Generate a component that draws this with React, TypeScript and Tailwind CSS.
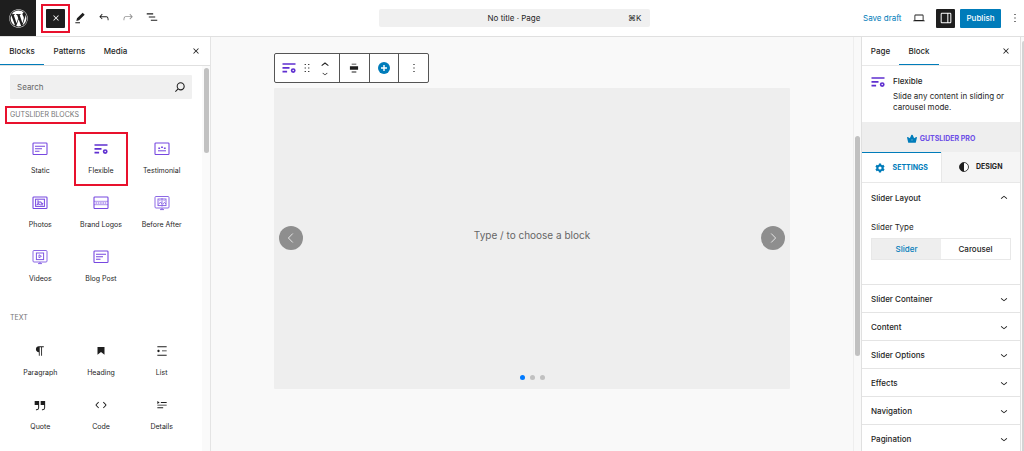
import type { ReactNode } from "react";
import { FaWordpress } from "react-icons/fa";

const paths = {
  close:
    "M12 13.06l3.712 3.713 1.061-1.06L13.061 12l3.712-3.712-1.06-1.06L12 10.938 8.288 7.227l-1.061 1.06L10.939 12l-3.712 3.712 1.06 1.061L12 13.061z",
  pencil: "m19 7-3-3-8.5 8.5-1 4 4-1L19 7Zm-7 11.5H5V20h7v-1.5Z",
  undo: "M18.3 11.7c-.6-.6-1.4-.9-2.3-.9H6.7l2.9-3.3-1.1-1-4.5 5L8.5 16l1-1-2.7-2.7H16c.5 0 .9.2 1.3.5 1 1 1 3.4 1 4.5v.3h1.5v-.2c0-1.5 0-4.3-1.5-5.7z",
  redo: "M15.6 6.5l-1.1 1 2.9 3.3H8c-.9 0-1.7.3-2.3.9-1.4 1.5-1.4 4.2-1.4 5.6v.2h1.5v-.3c0-1.1 0-3.5 1-4.5.3-.3.7-.5 1.3-.5h9.2L14.5 15l1.1 1.1 4.6-4.6-4.6-5z",
  listView: "M3 5.5h11V7.5H3V5.5Zm3.5 5.5h11v2h-11v-2ZM21 16.5H10v2h11v-2Z",
  more: "M13 19h-2v-2h2v2zm0-6h-2v-2h2v2zm0-6h-2V5h2v2z",
  drag: "M8 7h2V5H8v2zm0 6h2v-2H8v2zm0 6h2v-2H8v2zm6-14v2h2V5h-2zm0 8h2v-2h-2v2zm0 6h2v-2h-2v2z",
  search:
    "M13 5c-3.3 0-6 2.7-6 6 0 1.4.5 2.7 1.3 3.7l-3.8 3.8 1.1 1.1 3.8-3.8c1 .8 2.3 1.3 3.7 1.3 3.3 0 6-2.7 6-6S16.3 5 13 5zm0 10.5c-2.5 0-4.5-2-4.5-4.5s2-4.5 4.5-4.5 4.5 2 4.5 4.5-2 4.5-4.5 4.5z",
  laptop:
    "M20.5 16h-.7V8c0-1.1-.9-2-2-2H6.2c-1.1 0-2 .9-2 2v8h-.7c-.8 0-1.5.7-1.5 1.5h20c0-.8-.7-1.5-1.5-1.5zM5.7 8c0-.3.2-.5.5-.5h11.6c.3 0 .5.2.5.5v7.6H5.7V8z",
  drawer:
    "M18 4H6c-1.1 0-2 .9-2 2v12c0 1.1.9 2 2 2h12c1.1 0 2-.9 2-2V6c0-1.1-.9-2-2-2zm-4 14.5H6c-.3 0-.5-.2-.5-.5V6c0-.3.2-.5.5-.5h8v13zm4.5-.5c0 .3-.2.5-.5.5h-2.5v-13H18c.3 0 .5.2.5.5v12z",
  chevronDown: "M17.5 11.6L12 16l-5.5-4.4.9-1.2L12 14l4.5-3.6 1 1.2z",
  chevronUp: "M6.5 12.4L12 8l5.5 4.4-.9 1.2L12 10l-4.5 3.6-1-1.2z",
  align: "M5 9h14v6H5V9Zm3-4.5h8V6H8V4.5ZM8 18h8v1.5H8V18Z",
  paragraph:
    "m9.996 14v-.225l.004 0v6.225h1.5v-14.5h2.5v14.5h1.5v-14.5h3v-1.5h-8.504c-2.761 0-5 2.239-5 5 0 2.761 2.239 5 5 5z",
  heading: "M6 5V18.591L12 13.847L18 18.591V5H6Z",
  list: "M4 4v1.5h16V4H4zm8 8.5h8V11h-8v1.5zM4 20h16v-1.5H4V20zm4-8c0-1.1-.9-2-2-2s-2 .9-2 2 .9 2 2 2 2-.9 2-2z",
  quote:
    "M13 6v6h5.2v4c0 .8-.2 1.4-.5 1.7-.6.6-1.6.6-2.5.5h-.3v1.5h.5c1 0 2.3-.1 3.3-1 .6-.6 1-1.6 1-2.8V6H13zm-9 6h5.2v4c0 .8-.2 1.4-.5 1.7-.6.6-1.6.6-2.5.5h-.3v1.5h.5c1 0 2.3-.1 3.3-1 .6-.6 1-1.6 1-2.8V6H4v6z",
  code: "M20.8 10.7l-4.3-4.3-1.1 1.1 4.3 4.3c.1.1.1.3 0 .4l-4.3 4.3 1.1 1.1 4.3-4.3c.7-.8.7-1.9 0-2.6zM4.2 11.8l4.3-4.3-1-1-4.3 4.3c-.7.7-.7 1.8 0 2.5l4.3 4.3 1.1-1.1-4.3-4.3c-.2-.1-.2-.3-.1-.4z",
  details:
    "M4 16h10v1.5H4V16Zm0-4.5h16V13H4v-1.5ZM10 7h10v1.5H10V7ZM4 5.25l4 2.5-4 2.5v-5Z",
};

function Icon({
  name,
  className = "size-3.5",
}: { name: keyof typeof paths; className?: string }) {
  return (
    <svg viewBox="0 0 24 24" fill="currentColor" className={className}>
      <path d={paths[name]} />
    </svg>
  );
}

function FlexibleIcon() {
  return (
    <svg viewBox="0 0 14 12" className="h-3 w-3.5 text-[#5f2fd0]">
      <path
        d="M.5 2h13M.5 5.9h7M.5 9.7h4.6"
        stroke="currentColor"
        strokeWidth="1.7"
      />
      <circle
        cx="11.2"
        cy="8.6"
        r="1.6"
        fill="none"
        stroke="currentColor"
        strokeWidth="1.7"
      />
    </svg>
  );
}

// Rounded card outline shared by the slider block icons
function CardIcon({ children }: { children: ReactNode }) {
  return (
    <svg
      viewBox="0 0 16 14"
      fill="none"
      stroke="#7748e0"
      className="h-3.5 w-4"
    >
      <rect x="1" y="1" width="14" height="11.5" rx=".8" strokeWidth="1.1" />
      {children}
    </svg>
  );
}

function ScreenIcon({ children }: { children: ReactNode }) {
  return (
    <svg
      viewBox="0 0 16 16"
      fill="none"
      stroke="#8058e2"
      className="size-4"
    >
      <rect x="1" y="1.5" width="14" height="11.5" rx="1" strokeWidth=".9" />
      <path d="M6 14.6h4M8 13v1.5" strokeWidth=".9" />
      {children}
    </svg>
  );
}

const textLines = <path d="M3 4.2h10M3 6.7h7M3 9.2h4.5" strokeWidth="1.1" />;

const sliderBlocks = [
  { label: "Static", icon: <CardIcon>{textLines}</CardIcon> },
  { label: "Flexible", icon: <FlexibleIcon />, marked: true },
  {
    label: "Testimonial",
    icon: (
      <CardIcon>
        <path d="M4 8.8h8" strokeWidth="1" />
        <path d="M4.3 6.2h1.8M7.1 5.2h1.8M9.9 6.2h1.8" strokeWidth="1.4" />
      </CardIcon>
    ),
  },
  {
    label: "Photos",
    icon: (
      <CardIcon>
        <rect x="3.6" y="3.2" width="8.8" height="7.2" strokeWidth="1" />
        <path d="M6 4.2v5M6 6h3.2v1.4h2M4.5 8.8l2-1 2 1h2.5" />
      </CardIcon>
    ),
  },
  {
    label: "Brand Logos",
    icon: (
      <CardIcon>
        <path d="M1 5.3h14M1 8.7h14" strokeWidth=".6" />
        <path d="M2.5 7h11" strokeWidth="1.6" strokeDasharray="1.6 .7" opacity=".6" />
      </CardIcon>
    ),
  },
  {
    label: "Before After",
    icon: (
      <ScreenIcon>
        <rect x="4" y="4" width="8" height="6.6" strokeWidth=".9" />
        <path d="M8 3v8.6M4.5 9.4l2-2.4 1.5 2M9 9.4l1.4-2L12 9M5.4 5.6h1M9.6 5.6h1" strokeWidth=".8" />
      </ScreenIcon>
    ),
  },
  {
    label: "Videos",
    icon: (
      <ScreenIcon>
        <rect x="4.4" y="4" width="7.2" height="6.6" strokeWidth="1" />
        <path d="M7 5.8v3l2.4-1.5z" strokeWidth=".9" />
      </ScreenIcon>
    ),
  },
  { label: "Blog Post", icon: <CardIcon>{textLines}</CardIcon> },
];

const textBlocks = [
  { label: "Paragraph", icon: <Icon name="paragraph" /> },
  { label: "Heading", icon: <Icon name="heading" /> },
  { label: "List", icon: <Icon name="list" /> },
  { label: "Quote", icon: <Icon name="quote" className="size-4" /> },
  { label: "Code", icon: <Icon name="code" /> },
  { label: "Details", icon: <Icon name="details" /> },
];

const panels = [
  "Slider Container",
  "Content",
  "Slider Options",
  "Effects",
  "Navigation",
  "Pagination",
];

interface Block {
  label: string;
  icon: ReactNode;
  marked?: boolean;
}

function BlockGrid({ blocks }: { blocks: Block[] }) {
  return (
    <div className="grid grid-cols-3">
      {blocks.map((b) => (
        <button
          key={b.label}
          type="button"
          className={`mx-[3px] flex h-[54px] flex-col items-center justify-center gap-2 whitespace-nowrap text-[7px] leading-3 ${
            b.marked ? "border-2 border-[#e8112d]" : ""
          }`}
        >
          <span className="flex h-4 items-center">{b.icon}</span>
          {b.label}
        </button>
      ))}
    </div>
  );
}

function Header() {
  return (
    <header className="flex h-[37px] shrink-0 items-center border-b border-[#e0e0e0] bg-white">
      <a
        href="#dashboard"
        aria-label="View pages"
        className="flex size-9 items-center justify-center bg-[#1e1e1e] text-white"
      >
        <FaWordpress size={19} />
      </a>
      <div className="ml-[5px] border-2 border-[#e8112d] p-[3px]">
        <button
          type="button"
          aria-label="Close block inserter"
          className="flex size-[19px] items-center justify-center rounded-[1px] bg-[#1e1e1e] text-white"
        >
          <Icon name="close" />
        </button>
      </div>
      <div className="flex gap-1">
        <button type="button" aria-label="Tools" className="flex w-5 justify-center">
          <Icon name="pencil" className="size-4" />
        </button>
        <button type="button" aria-label="Undo" className="flex w-5 justify-center">
          <Icon name="undo" />
        </button>
        <button
          type="button"
          aria-label="Redo"
          className="flex w-5 justify-center text-[#949494]"
        >
          <Icon name="redo" />
        </button>
        <button type="button" aria-label="Document overview" className="flex w-5 justify-center">
          <Icon name="listView" />
        </button>
      </div>
      <div className="flex flex-1 justify-center pl-[3px]">
        <button
          type="button"
          className="grid h-[18px] w-full max-w-[271px] grid-cols-[1fr_auto_1fr] items-center rounded-[2px] bg-[#f0f0f0] px-2"
        >
          <span className="col-start-2">No title · Page</span>
          <span className="text-right">⌘K</span>
        </button>
      </div>
      <div className="flex items-center pr-0.5">
        <button type="button" className="w-[39px] whitespace-nowrap text-left text-[#007cba]">
          Save draft
        </button>
        <button type="button" aria-label="View" className="flex w-[34px] justify-center">
          <Icon name="laptop" />
        </button>
        <button
          type="button"
          aria-label="Settings"
          className="flex size-[19px] items-center justify-center rounded-[1px] bg-[#1e1e1e] text-white"
        >
          <Icon name="drawer" className="size-4" />
        </button>
        <button
          type="button"
          className="ml-[5px] h-[19px] w-[41px] rounded-[1px] bg-[#007cba] font-medium text-white"
        >
          Publish
        </button>
        <button type="button" aria-label="Options" className="ml-[7px] flex w-3.5 justify-center">
          <Icon name="more" className="size-4" />
        </button>
      </div>
    </header>
  );
}

function Inserter() {
  return (
    <aside className="flex w-[211px] shrink-0 flex-col border-r border-[#e4e4e4] bg-white">
      <div className="flex h-[29px] shrink-0 items-stretch border-b border-[#e0e0e0] font-medium">
        <button type="button" className="w-11 border-b border-[#007cba]">
          Blocks
        </button>
        <button type="button" className="w-[51px]">
          Patterns
        </button>
        <button type="button" className="w-[41px]">
          Media
        </button>
        <button type="button" aria-label="Close" className="ml-auto mr-[7px]">
          <Icon name="close" />
        </button>
      </div>
      <div className="flex min-h-0 flex-1">
        <div className="min-w-0 flex-1 overflow-hidden pb-2">
          <div className="mx-2.5 mt-[9px] flex h-6 items-center rounded-[1px] bg-[#f0f0f0] pl-[7px] pr-1">
            <input
              type="text"
              aria-label="Search"
              placeholder="Search"
              className="min-w-0 flex-1 bg-transparent outline-none placeholder:text-[#666]"
            />
            <Icon name="search" className="size-4" />
          </div>
          <h2 className="ml-[5px] mt-[7px] flex h-[18px] w-[81px] items-center whitespace-nowrap border-2 border-[#e8112d] pl-[3px] text-[7px] text-[#757575]">
            GUTSLIDER BLOCKS
          </h2>
          <div className="px-2.5 pt-2">
            <BlockGrid blocks={sliderBlocks} />
          </div>
          <h2 className="ml-2.5 mt-4 text-[7px] leading-4 text-[#757575]">
            TEXT
          </h2>
          <div className="px-2.5 pt-2">
            <BlockGrid blocks={textBlocks} />
          </div>
        </div>
        <div className="w-2 bg-[#fafafa] pl-0.5 pr-px pt-0.5">
          <div className="h-[85px] rounded-full bg-[#c1c1c1]" />
        </div>
      </div>
    </aside>
  );
}

function BlockToolbar() {
  return (
    <div className="flex h-[30px] w-[155px] divide-x divide-[#555] rounded-[2px] border border-[#555] bg-white">
      <div className="flex w-[65px] items-center justify-between pl-[7px] pr-1.5">
        <button type="button" aria-label="Flexible">
          <FlexibleIcon />
        </button>
        <button type="button" aria-label="Drag">
          <Icon name="drag" />
        </button>
        <div className="flex flex-col">
          <button type="button" aria-label="Move up" className="h-[11px] overflow-hidden">
            <Icon name="chevronUp" className="size-4" />
          </button>
          <button
            type="button"
            aria-label="Move down"
            className="flex h-[11px] flex-col justify-end overflow-hidden"
          >
            <Icon name="chevronDown" className="size-4" />
          </button>
        </div>
      </div>
      <button type="button" aria-label="Align" className="flex flex-1 items-center justify-center">
        <Icon name="align" />
      </button>
      <button type="button" aria-label="Add slide" className="flex flex-1 items-center justify-center">
        <svg viewBox="0 0 12 12" className="size-3">
          <circle cx="6" cy="6" r="6" fill="#007cba" />
          <path d="M6 3v6M3 6h6" stroke="#fff" strokeWidth="1.4" />
        </svg>
      </button>
      <button type="button" aria-label="Options" className="flex flex-1 items-center justify-center">
        <Icon name="more" />
      </button>
    </div>
  );
}

function SlideArrow({ d, label }: { d: string; label: string }) {
  return (
    <button
      type="button"
      aria-label={label}
      className="flex size-6 items-center justify-center rounded-full bg-[#8e8e8e]"
    >
      <svg viewBox="0 0 12 12" fill="none" stroke="#e6e6e6" className="size-3">
        <path d={d} strokeWidth="1" />
      </svg>
    </button>
  );
}

function Canvas() {
  return (
    <main className="flex min-w-0 flex-1 bg-[#f9f9f9]">
      <div className="min-w-0 flex-1 px-[63px] pt-4">
        <BlockToolbar />
        <section className="mt-[5px] flex h-[301px] flex-col rounded-[1px] bg-[#eee] pb-[9px]">
          <div className="flex flex-1 items-center justify-between px-[5px] pt-3">
            <SlideArrow d="M7.8 1.5 3.4 6l4.4 4.5" label="Previous slide" />
            <p className="pb-1.5 text-[10px] text-[#666]">
              Type / to choose a block
            </p>
            <SlideArrow d="M4.2 1.5 8.6 6l-4.4 4.5" label="Next slide" />
          </div>
          <div className="flex justify-center gap-[5px]">
            <span className="size-[5px] rounded-full bg-[#007aff]" />
            <span className="size-[5px] rounded-full bg-[#c0c0c0]" />
            <span className="size-[5px] rounded-full bg-[#c0c0c0]" />
          </div>
        </section>
      </div>
      <div className="w-2 border-l border-[#eee] px-px pt-[99px]">
        <div className="h-[220px] w-[5px] rounded-full bg-[#c1c1c1]" />
      </div>
    </main>
  );
}

function Sidebar() {
  return (
    <aside className="w-40 shrink-0 overflow-hidden border-x border-[#e0e0e0] bg-white">
      <div className="flex h-[29px] items-stretch border-b border-[#e8e8e8] font-medium">
        <button type="button" className="w-[37px]">
          Page
        </button>
        <button type="button" className="w-10 border-b border-[#007cba]">
          Block
        </button>
        <button type="button" aria-label="Close settings" className="ml-auto mr-[7px]">
          <Icon name="close" />
        </button>
      </div>
      <div className="flex gap-2 px-[9px] pb-[9px] pt-2.5">
        <FlexibleIcon />
        <div className="leading-[11px]">
          <h2 className="font-medium">Flexible</h2>
          <p className="mt-1 whitespace-nowrap">
            Slide any content in sliding or
            <br />
            carousel mode.
          </p>
        </div>
      </div>
      <a
        href="#pro"
        className="flex h-[30px] items-center justify-center gap-[3px] bg-[#eee] pt-1 text-[7px] font-bold text-[#6c4ee6]"
      >
        <svg viewBox="0 0 12 10" fill="#007cba" className="size-2.5">
          <path
            fillRule="evenodd"
            d="M1 2.6 3.4 4 4.8 1.2a1.2 1.2 0 1 1 2.4 0L8.6 4 11 2.6a.7.7 0 0 1 .9.8L10.5 9.6H1.5L.1 3.4A.7.7 0 0 1 1 2.6ZM6 5.2 5.2 6.6h1.6L6 5.2Z"
          />
        </svg>
        GUTSLIDER PRO
      </a>
      <div className="flex h-[31px] border-b border-[#e8e8e8] text-[7px] font-bold">
        <button
          type="button"
          className="flex flex-1 items-center justify-center gap-2 border-t border-[#007cba] text-[#007cba]"
        >
          <svg viewBox="0 0 24 24" fill="currentColor" className="size-2.5">
            <path
              fillRule="evenodd"
              d="M9.5 1h5l.6 3 2.2 1.3 2.9-1 2.8 4.6-2.3 2v2.2l2.3 2-2.8 4.6-2.9-1-2.2 1.3-.6 3h-5l-.6-3-2.2-1.3-2.9 1L1 15.1l2.3-2v-2.2L1 8.9l2.8-4.6 2.9 1L8.9 4l.6-3ZM12 8.2a3.8 3.8 0 1 0 0 7.6 3.8 3.8 0 0 0 0-7.6Z"
            />
          </svg>
          SETTINGS
        </button>
        <button
          type="button"
          className="flex flex-1 items-center justify-center gap-[7px] border-l border-[#e8e8e8] bg-[#f5f5f5]"
        >
          <svg viewBox="0 0 12 12" className="size-2.5">
            <circle cx="6" cy="6" r="5.4" fill="#fff" stroke="#1e1e1e" />
            <path d="M6 .6a5.4 5.4 0 0 0 0 10.8Z" fill="#1e1e1e" />
          </svg>
          DESIGN
        </button>
      </div>
      <div className="h-[101px] px-[9px]">
        <button
          type="button"
          className="flex h-[29px] w-full items-center justify-between font-medium"
        >
          Slider Layout
          <Icon name="chevronUp" />
        </button>
        <div className="mt-2 leading-[14px]">Slider Type</div>
        <div className="mt-1 flex h-[22px] border border-[#e8e8e8]">
          <button type="button" className="flex-1 bg-[#eee] font-medium text-[#007cba]">
            Slider
          </button>
          <button type="button" className="flex-1 font-medium">
            Carousel
          </button>
        </div>
      </div>
      {panels.map((p) => (
        <button
          key={p}
          type="button"
          className="flex h-7 w-full items-center justify-between border-t border-[#e4e4e4] px-[9px] font-medium"
        >
          {p}
          <Icon name="chevronDown" />
        </button>
      ))}
    </aside>
  );
}

export default function App() {
  return (
    <div className="flex h-screen flex-col overflow-hidden bg-white font-['Inter',sans-serif] text-[8px] leading-3 text-[#1e1e1e]">
      <Header />
      <div className="flex min-h-0 flex-1">
        <Inserter />
        <Canvas />
        <Sidebar />
        <div className="w-[3px] bg-[#fafafa] pl-px pt-1">
          <div className="h-full rounded-tl-sm bg-[#d4d4d4]" />
        </div>
      </div>
    </div>
  );
}
